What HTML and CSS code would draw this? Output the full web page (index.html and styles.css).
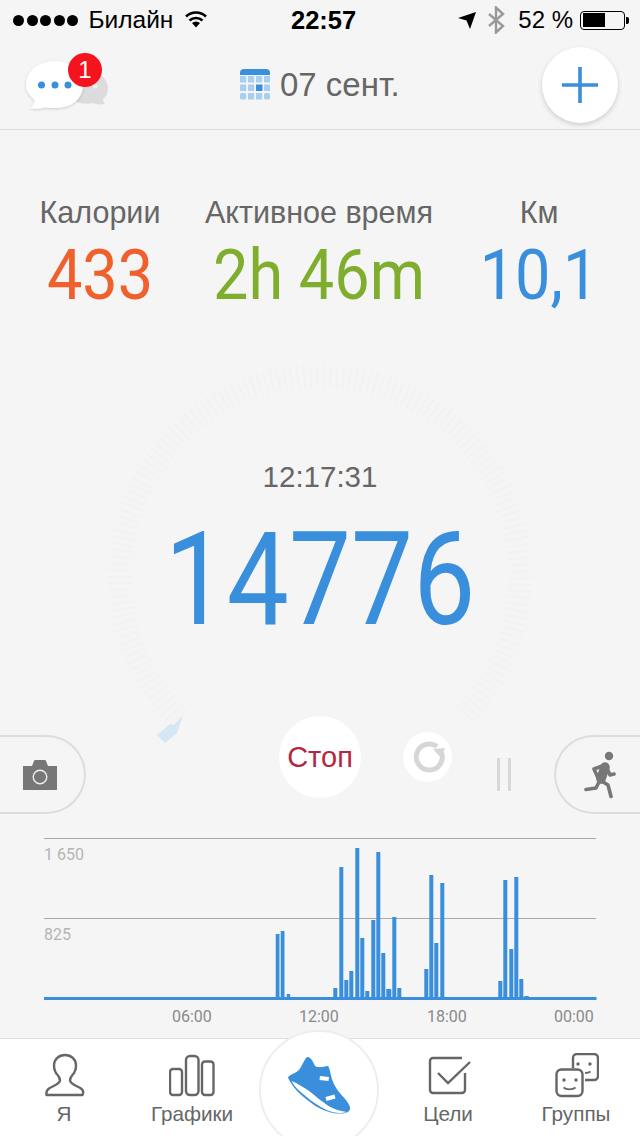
FILE: index.html
```html
<!DOCTYPE html>
<html lang="ru">
<head>
<meta charset="utf-8">
<title>Шаги</title>
<link rel="stylesheet" href="styles.css">
</head>
<body>
<div class="screen">
  <div class="status">
    <div class="status-left">
      <span class="dots"><i></i><i></i><i></i><i></i><i></i></span>
      <span class="carrier">Билайн</span>
      <svg class="wifi" viewBox="0 0 24 18"><path d="M12 17.5 8 13a6 6 0 0 1 8 0z" fill="#000"/><path d="M5.500 10.500a9.500 9.500 0 0 1 13 0M2 6.500a14.500 14.500 0 0 1 20 0" fill="none" stroke="#000" stroke-width="2.600"/></svg>
    </div>
    <div class="clock">22:57</div>
    <div class="status-right">
      <svg class="loc" viewBox="460 13 18 18"><path d="M460 19 478 13 472 30 468.500 21.500z" fill="#000"/></svg>
      <svg class="bt" viewBox="489 6 18 28"><path d="M491 14 505 26 498 32.500V7.500L505 14 491 26" fill="none" stroke="#999" stroke-width="2.400"/></svg>
      <span class="pct">52 %</span>
      <div class="batt"><div class="batt-fill"></div></div>
      <div class="batt-nub"></div>
    </div>
  </div>

  <header class="top">
    <div class="chat">
      <svg class="chat-svg" viewBox="20 50 94 66">
        <defs><filter id="sh" x="-20%" y="-20%" width="140%" height="140%"><feDropShadow dx="0" dy="1" stdDeviation="1.500" flood-color="#000" flood-opacity=".18"/></filter></defs>
        <path d="M88 70c11 0 20 8 20 17 0 5-2 9-5 11 0 2 1 4 2 5-5 1-9 0-12-1-8 2-16 0-22-4z" fill="#dcdcdc"/>
        <circle cx="95" cy="85" r="2.500" fill="#efefef"/>
        <path d="M55 60c16 0 28 10 28 24s-12 23-28 23c-4 0-7 0-10-1-4 2-9 2-15 1 3-3 5-5 5-8-5-4-9-9-9-15 0-14 13-24 29-24z" fill="#fff" filter="url(#sh)"/>
        <circle cx="41.500" cy="84" r="3.500" fill="#3a8fdd"/><circle cx="55" cy="84" r="3.500" fill="#3a8fdd"/><circle cx="68" cy="84" r="3.500" fill="#3a8fdd"/>
      </svg>
      <span class="badge">1</span>
    </div>
    <div class="date">
      <svg class="cal" viewBox="240 68 30 31">
        <path d="M240 74v-2a4 4 0 0 1 4-4h22a4 4 0 0 1 4 4v2z" fill="#3a8fdd"/>
        <g fill="#a8cff0">
          <rect x="240" y="75" width="6.200" height="6.500"/><rect x="248" y="75" width="6.200" height="6.500"/><rect x="256" y="75" width="6.200" height="6.500"/><rect x="264" y="75" width="6" height="6.500"/>
          <rect x="240" y="83.500" width="6.200" height="6.500"/><rect x="248" y="83.500" width="6.200" height="6.500"/><rect x="264" y="83.500" width="6" height="6.500"/>
          <rect x="240" y="92" width="6.200" height="6.500" rx="1.500"/><rect x="248" y="92" width="6.200" height="6.500"/><rect x="256" y="92" width="6.200" height="6.500"/><rect x="264" y="92" width="6" height="6.500" rx="1.500"/>
        </g>
        <rect x="256" y="83.500" width="6.500" height="6.500" fill="#3a8fdd"/>
      </svg>
      <span>07 сент.</span>
    </div>
    <button class="plus" type="button"><svg viewBox="0 0 36 36"><path d="M18 0v36M0 18h36" stroke="#3a8fdd" stroke-width="3.600"/></svg></button>
  </header>

  <main class="main">
    <section class="stats">
      <div class="stat"><div class="stat-label">Калории</div><div class="stat-value orange">433</div></div>
      <div class="stat"><div class="stat-label">Активное время</div><div class="stat-value green">2h 46m</div></div>
      <div class="stat"><div class="stat-label">Км</div><div class="stat-value blue">10,1</div></div>
    </section>

    <section class="dial">
      <svg class="dial-ring" viewBox="100 360 440 400">
        <path d="M179 718A200 200 0 1 1 461 718" fill="none" stroke="#f2f2f2" stroke-width="24" stroke-dasharray="1.800 4.700"/>
        <path d="M157 735 170 724 174 725 183 715 177 733 165 743z" fill="#d6e7f4"/>
      </svg>
      <div class="time">12:17:31</div>
      <div class="count">14776</div>
    </section>

    <section class="controls">
      <div class="pill pill-left">
        <svg viewBox="23 760 34 30"><path d="M23 766h9l2-5c0-1 1-1 2-1h8c1 0 2 0 2 1l2 5h9v23c0 1 0 1-1 1H24c-1 0-1 0-1-1z" fill="#777"/><circle cx="40" cy="777" r="6.800" fill="none" stroke="#eee" stroke-width="1.400"/></svg>
      </div>
      <button class="stop" type="button">Стоп</button>
      <div class="refresh">
        <svg viewBox="411 740 34 34"><path d="M437 746.500a13 13 0 1 0 4.500 6" fill="none" stroke="#d6d6d6" stroke-width="5"/><path d="M433 749 445 748 441 758z" fill="#d6d6d6"/></svg>
      </div>
      <div class="pause"><i></i><i></i></div>
      <div class="pill pill-right">
        <svg viewBox="584 750 34 50">
          <circle cx="609" cy="756" r="4.200" fill="#777"/>
          <path d="M605 767 601 779" stroke="#777" stroke-width="9.500" stroke-linecap="round"/>
          <path d="M605 765 594 769 598 778M606 766 610 775 614 774M600 780 596 788 586 789.500M600 780 608 785 611 796.500" fill="none" stroke="#777" stroke-width="3.600" stroke-linecap="round" stroke-linejoin="round"/>
        </svg>
      </div>
    </section>

    <section class="chart">
      <svg class="chart-svg" viewBox="0 830 640 208">
        <path d="M44 838.500H596M44 918.500H596" stroke="#aaa" stroke-width="1"/>
        <text class="y-label" x="44" y="860">1 650</text>
        <text class="y-label" x="44" y="940">825</text>
        <g fill="#3a8fdd">
          <rect x="275.700" y="934" width="3.800" height="64"/>
          <rect x="280.700" y="931" width="3.800" height="67"/>
          <rect x="286.700" y="994" width="3.500" height="4"/>
          <rect x="333.300" y="988" width="4" height="10"/>
          <rect x="339.300" y="867" width="4" height="131"/>
          <rect x="344.300" y="980" width="4" height="18"/>
          <rect x="349.300" y="971" width="4" height="27"/>
          <rect x="355.300" y="848" width="4" height="150"/>
          <rect x="360.300" y="938" width="4" height="60"/>
          <rect x="365.300" y="991" width="4" height="7"/>
          <rect x="371.300" y="920" width="4" height="78"/>
          <rect x="376.300" y="852" width="4" height="146"/>
          <rect x="381.300" y="953" width="4" height="45"/>
          <rect x="386.300" y="989" width="5" height="9"/>
          <rect x="392.300" y="917" width="4" height="81"/>
          <rect x="397.300" y="988" width="4" height="10"/>
          <rect x="424.300" y="969" width="4" height="29"/>
          <rect x="429.300" y="875" width="4" height="123"/>
          <rect x="434.300" y="943" width="4" height="55"/>
          <rect x="440.300" y="883" width="4" height="115"/>
          <rect x="498.300" y="981" width="4" height="17"/>
          <rect x="503.300" y="880" width="4" height="118"/>
          <rect x="509.300" y="949" width="4" height="49"/>
          <rect x="514.300" y="877" width="4" height="121"/>
          <rect x="519.300" y="979" width="4" height="19"/>
          <rect x="524.300" y="996" width="4.500" height="2"/>
          <rect x="44" y="997" width="552.500" height="3"/>
        </g>
        <text class="x-label" x="172" y="1022">06:00</text>
        <text class="x-label" x="299" y="1022">12:00</text>
        <text class="x-label" x="427" y="1022">18:00</text>
        <text class="x-label" x="554" y="1022">00:00</text>
      </svg>
    </section>
  </main>

  <nav class="tabs">
    <a class="tab">
      <svg viewBox="40 1053 46 46"><path d="M46.500 1095h35c1.500-3 .5-5-1.500-6.500-4-3-10-3.500-11-8 0-2 .5-3 2-5 3-3 4-7 4-10 0-6.500-5-10.500-11-10.500s-11 4-11 10.500c0 3 1 7 4 10 1.500 2 2 3 2 5-1 4.500-7 5-11 8-2 1.500-3 3.500-2.500 6.500z" fill="none" stroke="#666" stroke-width="2.400" stroke-linejoin="round"/></svg>
      <span>Я</span>
    </a>
    <a class="tab">
      <svg viewBox="168 1053 46 46"><g fill="none" stroke="#666" stroke-width="2.400"><rect x="169" y="1069" width="12" height="26" rx="3"/><rect x="185" y="1056" width="12.500" height="39" rx="4"/><rect x="201" y="1061.500" width="11.500" height="33.500" rx="3"/></g></svg>
      <span>Графики</span>
    </a>
    <a class="tab tab-main">
      <span class="shoe-circle">
        <svg viewBox="285 1053 68 68">
          <path d="M288 1077c3-3 8-4 11-7 3-4 5-10 8-13 3 0 5 2 8 9 3 2 8 1 12 0 2 0 2 2 3 5 1 5 2 10 5 15 3 6 10 12 13 17 2 3 3 6 1 8-3 3-10 3-16 2-8-2-16-5-23-11-8-6-15-12-19-19-2-3-3-5-3-6z" fill="#3a8fdd"/>
          <path d="M291.500 1081c5 2 12 6 19 11 6 5 12 10 18 14 5 3 11 5 18 6-6 2-13 1-20-2-8-4-14-8-21-14-6-5-11-9-14-15z" fill="#fff"/>
          <path d="M320 1076l9 1-.500 4-9-1zM325.500 1097l9-2.500 1 4-9 2.500z" fill="#fff"/>
        </svg>
      </span>
    </a>
    <a class="tab">
      <svg viewBox="424 1053 46 46"><path d="M461 1058h-29a3 3 0 0 0-3 3v29a3 3 0 0 0 3 3h29a3 3 0 0 0 3-3v-17" fill="none" stroke="#666" stroke-width="2.400"/><path d="M437 1073l10 10 22-21" fill="none" stroke="#666" stroke-width="2.400"/></svg>
      <span>Цели</span>
    </a>
    <a class="tab">
      <svg viewBox="552 1053 46 46">
        <path d="M572 1068v-10a4 4 0 0 1 4-4h17a4 4 0 0 1 4 4v18a4 4 0 0 1-4 4h-9" fill="none" stroke="#666" stroke-width="2.400"/>
        <rect x="555.500" y="1069.500" width="26" height="26.500" rx="5" fill="none" stroke="#666" stroke-width="2.400"/>
        <circle cx="577" cy="1064" r="1.700" fill="#666"/><circle cx="589" cy="1064" r="1.700" fill="#666"/><path d="M584 1073c2 0 4 0 5.500-1.500" fill="none" stroke="#666" stroke-width="1.800"/>
        <circle cx="563" cy="1080" r="1.700" fill="#666"/><circle cx="575" cy="1080" r="1.700" fill="#666"/><path d="M562.500 1087.500c3 2.500 9 2.500 12 0" fill="none" stroke="#666" stroke-width="1.800"/>
      </svg>
      <span>Группы</span>
    </a>
  </nav>
</div>
</body>
</html>
```
FILE: styles.css
```css
* { box-sizing: border-box; }
html, body { margin: 0; padding: 0; }
body {
  width: 640px;
  height: 1136px;
  overflow: hidden;
  background: #f5f5f5;
  font-family: "Liberation Sans", Arial, sans-serif;
  color: #666;
}
.screen { width: 640px; height: 1136px; display: flex; flex-direction: column; overflow: hidden; }

/* status bar */
.status {
  height: 40px;
  display: grid;
  grid-template-columns: 278px auto 1fr;
  align-items: center;
  padding: 0 11px 0 13px;
  color: #000;
  font-size: 24.500px;
}
.status-left, .status-right { display: flex; align-items: center; }
.dots { display: flex; gap: 3px; }
.dots i { width: 11px; height: 11px; border-radius: 50%; background: #000; display: block; margin-right: -.5px; }
.carrier { margin-left: 11px; }
.wifi { width: 24px; height: 18px; margin-left: 11px; margin-top: -2px; }
.clock { font-weight: 700; font-size: 25.500px; }
.status-right { justify-content: flex-end; }
.loc { width: 18px; height: 18px; margin-right: 11px; margin-top: 2px; }
.bt { width: 18px; height: 28px; margin-right: 13px; }
.pct { margin-right: 7px; font-size: 24px; }
.batt { width: 45px; height: 19px; border: 1.500px solid #000; border-radius: 4px; padding: 1.500px; }
.batt-fill { width: 22px; height: 100%; background: #000; }
.batt-nub { width: 3px; height: 7px; background: #000; border-radius: 0 2px 2px 0; margin-left: 1px; }

/* header */
.top {
  height: 90px;
  display: flex;
  align-items: center;
  padding: 0 22px 0 20px;
  border-bottom: 1px solid #ddd;
}
.chat { position: relative; width: 94px; height: 66px; margin-top: -1px; }
.chat-svg { width: 94px; height: 66px; display: block; }
.badge {
  position: absolute;
  left: 48px; top: 2px;
  width: 34px; height: 34px;
  border-radius: 50%;
  background: #f5141e;
  color: #fff;
  font-size: 24px;
  line-height: 34px;
  text-align: center;
}
.date { display: flex; align-items: center; margin-left: 126px; font-size: 33px; color: #666; }
.cal { width: 30px; height: 31px; margin-right: 10px; }
.plus {
  margin: 0 0 0 auto;
  width: 76px; height: 76px;
  border: 0; padding: 20px;
  border-radius: 50%;
  background: #fff;
  box-shadow: 0 2px 5px rgba(0,0,0,.16);
}
.plus svg { display: block; width: 36px; height: 36px; }

/* main */
.main { flex: 1; display: flex; flex-direction: column; min-height: 0; }
.stats {
  height: 200px;
  padding-top: 64px;
  display: grid;
  grid-template-columns: 200px 238px 202px;
  text-align: center;
}
.stat-label { font-size: 30.500px; line-height: 36px; color: #666; }
.stat-value { font-family: Roboto, sans-serif; font-weight: 400; font-size: 70px; line-height: 76px; white-space: nowrap; margin-top: 7px; transform: scaleX(.9); }
.orange { color: #f0602c; }
.green { color: #7fae2e; }
.blue { color: #3a8fdd; }

.dial { position: relative; height: 386px; text-align: center; }
.dial-ring { position: absolute; left: 100px; top: 30px; width: 440px; height: 400px; }
.time { position: relative; padding-top: 129px; font-size: 29.500px; line-height: 36px; color: #666; }
.count { position: relative; font-family: Roboto, sans-serif; font-weight: 400; font-size: 130px; line-height: 136px; color: #3a8fdd; margin-top: 17px; transform: scaleX(.85); }

.controls { height: 114px; display: flex; align-items: flex-start; position: relative; }
.pill { width: 86px; height: 79px; margin-top: 19px; border: 2px solid #ddd; display: flex; align-items: center; justify-content: center; }
.pill-left { border-left: 0; border-radius: 0 40px 40px 0; padding-right: 4px; }
.pill-left svg { width: 34px; height: 30px; margin-top: 1px; }
.pill-right { border-right: 0; border-radius: 40px 0 0 40px; margin-left: auto; }
.pill-right svg { width: 34px; height: 50px; margin-left: 6px; }
.stop {
  width: 82px; height: 82px;
  margin-left: 193px;
  border: 0; padding: 0;
  border-radius: 50%;
  background: #fff;
  color: #b5263f;
  font: 29px "Liberation Sans", Arial, sans-serif;
}
.refresh { width: 49px; height: 50px; margin: 16px 0 0 42px; border-radius: 50%; background: #fff; display: flex; align-items: center; justify-content: center; }
.refresh svg { width: 34px; height: 34px; }
.pause { display: flex; gap: 8px; margin: 42px 0 0 45px; }
.pause i { width: 3px; height: 33px; background: #d8d8d8; display: block; }

.chart { height: 208px; }
.chart-svg { display: block; width: 640px; height: 208px; }
.y-label { font-family: Roboto, sans-serif; font-size: 16px; fill: #b4b4b4; }
.x-label { font-family: Roboto, sans-serif; font-size: 16px; fill: #8a8a8a; }

/* tabs */
.tabs {
  height: 98px;
  flex: none;
  display: grid;
  grid-template-columns: repeat(5, 128px);
  background: #fff;
  border-top: 1px solid #ddd;
}
.tab { display: flex; flex-direction: column; align-items: center; padding-top: 14px; font-size: 20.700px; color: #666; position: relative; }
.tab svg { width: 46px; height: 46px; display: block; }
.tab span { line-height: 24px; margin-top: 3px; }
.tab-main { padding: 0; }
.tab .shoe-circle {
  position: absolute;
  left: 3px; top: -9px;
  width: 120px; height: 120px;
  margin: 0;
  border-radius: 50%;
  background: #fff;
  border: 2px solid #eee;
  display: flex; align-items: center; justify-content: center;
}
.tab .shoe-circle svg { width: 68px; height: 68px; margin-top: -6px; }
```
